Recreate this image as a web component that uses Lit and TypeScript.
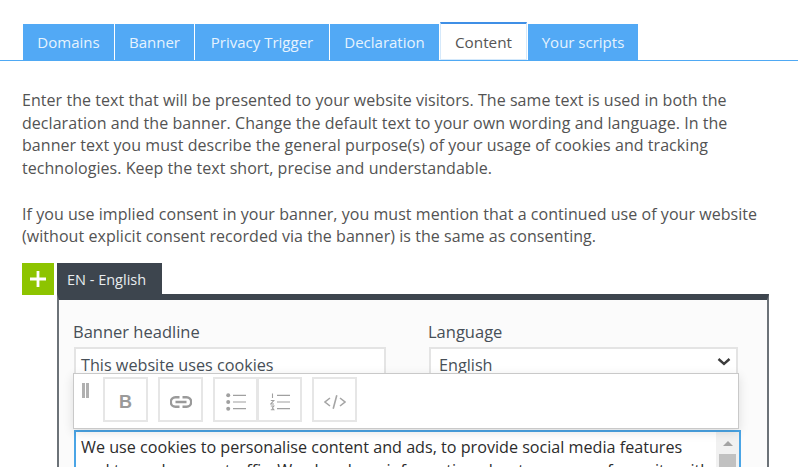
import { LitElement, html, css } from "lit";
import { customElement } from "lit/decorators.js";

@customElement("app-root")
export class AppRoot extends LitElement {
  static styles = css`
    :host {
      display: block;
      width: 798px;
      height: 467px;
      overflow: hidden;
      background: #fff;
      font-family: "Open Sans", sans-serif;
      font-size: 16px;
      color: #444;
    }
    .tabs {
      display: flex;
      gap: 1px;
      height: 36px;
      margin-top: 24px;
      padding-left: 23px;
      border-bottom: 1px solid #4fa9f4;
      box-sizing: content-box;
    }
    .tab {
      display: flex;
      align-items: center;
      justify-content: center;
      background: #52a9f5;
      color: #e6f3fe;
      box-sizing: border-box;
      height: 36px;
      font-size: 15px;
    }
    .tab.active {
      background: #fff;
      color: #555;
      font-size: 15.3px;
      margin-top: -2px;
      height: 38px;
      border-top: 2px solid #3f8fe6;
      border-left: 1px solid #d5e9fb;
      border-right: 1px solid #d5e9fb;
      border-bottom: 1px solid #d5e9fb;
    }
    .intro {
      margin: 28px 0 0 22px;
      width: 770px;
      line-height: 22.7px;
      font-size: 16px;
      letter-spacing: 0.05px;
      color: #535353;
    }
    .intro p { margin: 0 0 22.7px; white-space: nowrap; }
    .langs {
      display: flex;
      margin: -8px 0 0 22px;
      height: 31px;
      gap: 3px;
    }
    .plus {
      width: 32px;
      height: 32px;
      background: #8dc400;
      display: flex;
      align-items: center;
      justify-content: center;
    }
    .lang-tab {
      width: 105px;
      height: 31px;
      box-sizing: border-box;
      padding: 2px 0 0 10px;
      background: #3d454e;
      color: #e8ecef;
      font-size: 14.5px;
      display: flex;
      align-items: center;
    }
    .panel {
      margin: 0 0 0 57px;
      width: 712px;
      height: 200px;
      box-sizing: border-box;
      background: #fbfbfb;
      border-top: 6px solid #3d454e;
      border-left: 2px solid #6c7278;
      border-right: 2px solid #6c7278;
      padding: 22px 0 0 15px;
      position: relative;
    }
    .fields {
      display: grid;
      grid-template-columns: 312px 309px;
      column-gap: 43px;
    }
    .field label {
      display: block;
      font-size: 16.5px;
      line-height: 20px;
      color: #474f57;
      margin: 0 0 5px -1px;
    }
    .input {
      height: 40px;
      box-sizing: border-box;
      border: 2px solid #e4e4e4;
      background: #fff;
      padding: 5px 5px;
      font-size: 16.2px;
      line-height: 22px;
      color: #474f57;
      position: relative;
    }
    .input.select { padding-left: 8px; }
    .chev { position: absolute; right: 5px; top: 8px; }
    .toolbar {
      position: absolute;
      left: 14px;
      width: 666px;
      top: 73px;
      height: 56px;
      box-sizing: border-box;
      background: #fff;
      border: 1px solid #c9c9c9;
      box-shadow: 0 3px 10px rgba(0,0,0,.12);
      display: flex;
      align-items: flex-start;
      padding: 3px 0 0 29px;
      z-index: 2;
    }
    .grip {
      position: absolute;
      left: 8px;
      top: 9px;
      width: 7px;
      height: 15px;
      border-left: 3px solid #b0b0b0;
      border-right: 3px solid #b0b0b0;
      box-sizing: border-box;
    }
    .btn-group { display: flex; margin-right: 10px; }
    .btn {
      width: 45px;
      height: 45px;
      box-sizing: border-box;
      border: 2px solid #e6e6e6;
      padding-top: 6px;
      display: flex;
      align-items: center;
      justify-content: center;
      color: #9a9a9a;
      font-family: "Liberation Sans", sans-serif;
      font-weight: 700;
      font-size: 18px;
    }
    .btn-group .btn + .btn { margin-left: -1px; }
    .editor {
      position: absolute;
      left: 15px;
      width: 667px;
      top: 130px;
      height: 80px;
      box-sizing: border-box;
      background: #fff;
      border: 2px solid #4aa5e6;
      padding: 4px 28px 0 5px;
      color: #2c2c2c;
      font-size: 16.15px;
      line-height: 23px;
      white-space: nowrap;
      overflow: hidden;
    }
    .scroll {
      position: absolute;
      right: 0;
      top: 0;
      bottom: 0;
      width: 23px;
      background: #f1f1f1;
    }
    .arrow {
      position: absolute;
      left: 7px;
      top: 9px;
      width: 0;
      height: 0;
      border-left: 5px solid transparent;
      border-right: 5px solid transparent;
      border-bottom: 5px solid #a3a3a3;
    }
    .thumb {
      position: absolute;
      left: 3px;
      top: 22px;
      width: 17px;
      height: 40px;
      background: #c1c1c1;
    }
  `;

  render() {
    const tabs: [string, number, boolean][] = [
      ["Domains", 91, false],
      ["Banner", 79, false],
      ["Privacy Trigger", 134, false],
      ["Declaration", 109, false],
      ["Content", 87, true],
      ["Your scripts", 110, false],
    ];
    return html`
      <div class="tabs">
        ${tabs.map(
          ([t, w, a]) =>
            html`<div class="tab ${a ? "active" : ""}" style="width:${w}px">${t}</div>`
        )}
      </div>
      <div class="intro">
        <p>Enter the text that will be presented to your website visitors. The same text is used in both the<br />declaration and the banner. Change the default text to your own wording and language. In the<br />banner text you must describe the general purpose(s) of your usage of cookies and tracking<br />technologies. Keep the text short, precise and understandable.</p>
        <p>If you use implied consent in your banner, you must mention that a continued use of your website<br />(without explicit consent recorded via the banner) is the same as consenting.</p>
      </div>
      <div class="langs">
        <div class="plus">
          <svg width="16" height="16" viewBox="0 0 16 16"><path d="M8 0v16M0 8h16" stroke="#fff" stroke-width="2.800" fill="none" /></svg>
        </div>
        <div class="lang-tab">EN - English</div>
      </div>
      <div class="panel">
        <div class="fields">
          <div class="field">
            <label>Banner headline</label>
            <div class="input">This website uses cookies</div>
          </div>
          <div class="field">
            <label>Language</label>
            <div class="input select">
              English
              <svg class="chev" width="14" height="10" viewBox="0 0 14 10"><path d="M1.5 2l5.5 5 5.500-5" stroke="#3c3c3c" stroke-width="2.400" fill="none" /></svg>
            </div>
          </div>
        </div>
        <div class="toolbar">
          <div class="grip"></div>
          <div class="btn-group"><div class="btn">B</div></div>
          <div class="btn-group">
            <div class="btn">
              <svg width="22" height="12" viewBox="0 0 22 12" fill="none" stroke="#9a9a9a" stroke-width="2.400">
                <path d="M9.500 1.300H5.500a4.700 4.700 0 0 0 0 9.400h4M12.500 1.300h4a4.700 4.700 0 0 1 0 9.400h-4M5.500 6h11" />
              </svg>
            </div>
          </div>
          <div class="btn-group">
            <div class="btn">
              <svg width="20" height="18" viewBox="0 0 20 18" fill="#a0a0a0">
                <circle cx="2.200" cy="2.300" r="2" /><circle cx="2.200" cy="9" r="2" /><circle cx="2.200" cy="15.700" r="2" />
                <path d="M7 1.700h13v1.200H7zM7 8.400h13v1.200H7zM7 15.100h13v1.200H7z" />
              </svg>
            </div>
            <div class="btn">
              <svg width="20" height="18" viewBox="0 0 20 18" fill="none" stroke="#a0a0a0">
                <path d="M2.500 .5v4.500M.8 7.500h3l-3 3.500h3.200M.8 13h3l-1.400 1.900 1.400 1.900h-3" stroke-width="1.100" />
                <path d="M7 2.300h13M7 9h13M7 15.700h13" stroke-width="1.200" />
              </svg>
            </div>
          </div>
          <div class="btn-group">
            <div class="btn">
              <svg width="22" height="14" viewBox="0 0 22 14" fill="none" stroke="#a5a5a5" stroke-width="1.600">
                <path d="M6 3L1 7l5 4M16 3l5 4-5 4M12.800 .3L9.200 13.700" />
              </svg>
            </div>
          </div>
        </div>
        <div class="editor">
          We use cookies to personalise content and ads, to provide social media features<br />
          and to analyse our traffic. We also share information about your use of our site with
          <div class="scroll"><div class="arrow"></div><div class="thumb"></div></div>
        </div>
      </div>
    `;
  }
}
